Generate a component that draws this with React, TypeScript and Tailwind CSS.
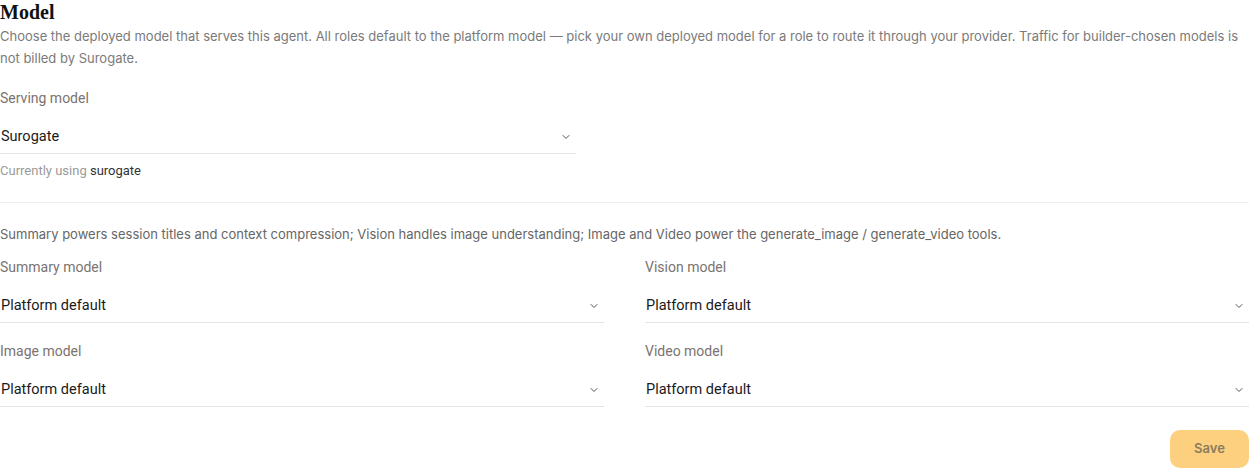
import { ChevronDown } from 'lucide-react';

interface ModelSelectProps {
  label: string;
  value: string;
}

function ModelSelect({ label, value }: ModelSelectProps) {
  return (
    <div className="flex flex-col">
      <span className="h-[22px] text-[14px] leading-[22px] text-[#7a7370]">{label}</span>
      <div className="mt-[9px] flex h-[36px] items-center justify-between border-b border-[#e4e4e4] pl-[1px] pr-[4px] pt-[2px]">
        <span className="text-[14.5px] text-[#1a1a1a]">{value}</span>
        <ChevronDown className="h-[12px] w-[12px] text-[#555]" strokeWidth={2} />
      </div>
    </div>
  );
}

export default function App() {
  return (
    <div className="min-h-[468px] w-[1249px] bg-white font-['Roboto',sans-serif]">
      <h2 className="pt-[1px] font-['Liberation_Serif',serif] text-[20px] font-bold leading-[22px] text-[#111]">
        Model
      </h2>
      <p className="mt-[2px] font-['Inter',sans-serif] text-[13px] leading-[22px] text-[#7a7a7a]">
        Choose the deployed model that serves this agent. All roles default to the platform model — pick your own deployed model for a role to route it through your provider. Traffic for builder-chosen models is not billed by Surogate.
      </p>

      <div className="mt-[18px] w-[576px]">
        <ModelSelect label="Serving model" value="Surogate" />
        <p className="mt-[8px] text-[13px] leading-[18px] text-[#9a9a9a]">
          Currently using <span className="text-[#333]">surogate</span>
        </p>
      </div>

      <div className="mt-[22px] border-t border-[#f0f0f0]" />

      <p className="mt-[21px] font-['Inter',sans-serif] text-[13px] leading-[20px] text-[#666]">
        Summary powers session titles and context compression; Vision handles image understanding; Image and Video power the generate_image / generate_video tools.
      </p>

      <div className="mt-[12px] grid grid-cols-2 gap-x-[41px] gap-y-[17px]">
        <ModelSelect label="Summary model" value="Platform default" />
        <ModelSelect label="Vision model" value="Platform default" />
        <ModelSelect label="Image model" value="Platform default" />
        <ModelSelect label="Video model" value="Platform default" />
      </div>

      <div className="mt-[23px] flex justify-end">
        <button
          type="button"
          className="h-[38px] w-[79px] rounded-[10px] bg-[#fdd07f] font-['Inter',sans-serif] text-[13px] font-semibold text-[#8a7c60]"
        >
          Save
        </button>
      </div>
    </div>
  );
}
